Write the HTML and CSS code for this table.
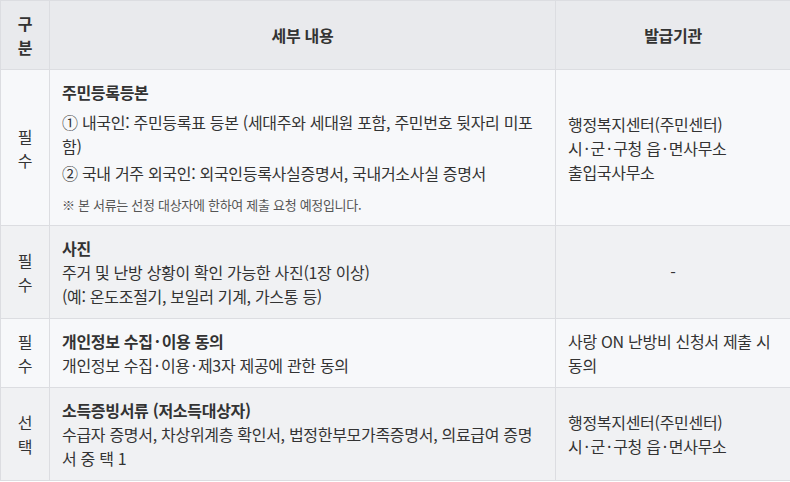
FILE: index.html
```html
<!DOCTYPE html>
<html lang="ko">
<head>
<meta charset="utf-8">
<link rel="stylesheet" href="styles.css">
</head>
<body>
<table class="doc-table">
  <colgroup>
    <col class="c-type">
    <col class="c-detail">
    <col class="c-issuer">
  </colgroup>
  <thead>
    <tr>
      <th class="type">구분</th>
      <th>세부 내용</th>
      <th>발급기관</th>
    </tr>
  </thead>
  <tbody>
    <tr class="light">
      <td class="type">필수</td>
      <td>
        <div class="title t-gap">주민등록등본</div>
        <div class="item">① 내국인: 주민등록표 등본 (세대주와 세대원 포함, 주민번호 뒷자리 미포함)</div>
        <div class="item item2">② 국내 거주 외국인: 외국인등록사실증명서, 국내거소사실 증명서</div>
        <div class="note">※ 본 서류는 선정 대상자에 한하여 제출 요청 예정입니다.</div>
      </td>
      <td>행정복지센터(주민센터)<br>시<span class="dot">·</span>군<span class="dot">·</span>구청 읍<span class="dot">·</span>면사무소<br>출입국사무소</td>
    </tr>
    <tr class="dark">
      <td class="type">필수</td>
      <td>
        <div class="title">사진</div>
        <div>주거 및 난방 상황이 확인 가능한 사진(1장 이상)</div>
        <div>(예: 온도조절기, 보일러 기계, 가스통 등)</div>
      </td>
      <td class="center">-</td>
    </tr>
    <tr class="light">
      <td class="type">필수</td>
      <td>
        <div class="title">개인정보 수집<span class="dot">·</span>이용 동의</div>
        <div>개인정보 수집<span class="dot">·</span>이용<span class="dot">·</span>제3자 제공에 관한 동의</div>
      </td>
      <td>사랑 ON 난방비 신청서 제출 시 동의</td>
    </tr>
    <tr class="dark">
      <td class="type">선택</td>
      <td>
        <div class="title">소득증빙서류 (저소득대상자)</div>
        <div>수급자 증명서, 차상위계층 확인서, 법정한부모가족증명서, 의료급여 증명서 중 택 1</div>
      </td>
      <td>행정복지센터(주민센터)<br>시<span class="dot">·</span>군<span class="dot">·</span>구청 읍<span class="dot">·</span>면사무소</td>
    </tr>
  </tbody>
</table>
</body>
</html>
```

FILE: styles.css
```css
html, body {
  margin: 0;
  padding: 0;
  background: #ffffff;
}
body {
  font-family: "Noto Sans CJK KR", "Noto Sans", sans-serif;
  font-size: 16px;
  line-height: 24px;
  letter-spacing: -0.3px;
  color: #333333;
}
.doc-table {
  width: 790px;
  border-collapse: collapse;
  table-layout: fixed;
}
.c-type { width: 49px; }
.c-detail { width: 506px; }
.c-issuer { width: 235px; }
.doc-table th,
.doc-table td {
  border: 1px solid #dcdde1;
  padding: 10px 12px;
  vertical-align: middle;
  text-align: left;
}
.doc-table th {
  background: #e9eaed;
  font-weight: 700;
  text-align: center;
}
.doc-table td.type,
.doc-table td.center {
  text-align: center;
}
tr.light td { background: #f7f8fa; }
tr.dark td { background: #f0f1f3; }
.title {
  font-weight: 700;
}
.t-gap { margin-bottom: 6px; }
.item2 { margin-top: 3px; }
.dot {
  margin: 0 2px;
}
.note {
  margin-top: 10px;
  font-size: 13px;
  line-height: 20px;
  color: #555555;
}
```
